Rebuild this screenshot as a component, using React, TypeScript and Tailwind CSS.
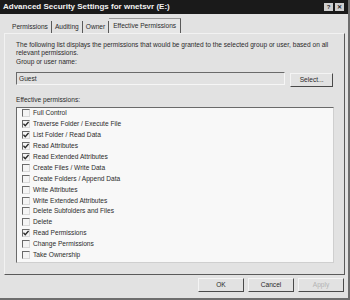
import React from 'react';

const perms: { label: string; checked: boolean }[] = [
  { label: 'Full Control', checked: false },
  { label: 'Traverse Folder / Execute File', checked: true },
  { label: 'List Folder / Read Data', checked: true },
  { label: 'Read Attributes', checked: true },
  { label: 'Read Extended Attributes', checked: true },
  { label: 'Create Files / Write Data', checked: false },
  { label: 'Create Folders / Append Data', checked: false },
  { label: 'Write Attributes', checked: false },
  { label: 'Write Extended Attributes', checked: false },
  { label: 'Delete Subfolders and Files', checked: false },
  { label: 'Delete', checked: false },
  { label: 'Read Permissions', checked: true },
  { label: 'Change Permissions', checked: false },
  { label: 'Take Ownership', checked: false },
];

function CheckBox({ checked }: { checked: boolean }) {
  return (
    <span className="w-[8px] h-[8px] border border-t-[#6a6a6a] border-l-[#6a6a6a] border-r-[#d8d8d8] border-b-[#d8d8d8] bg-[#f4f4f4] flex items-center justify-center shrink-0">
      {checked && (
        <svg width="6" height="6" viewBox="0 0 7 7">
          <path d="M0.5 3.2 L2.6 5.4 L6.5 1" fill="none" stroke="#2a2a2a" strokeWidth="1.6" />
        </svg>
      )}
    </span>
  );
}

function WinButton({ label, disabled }: { label: string; disabled?: boolean }) {
  return (
    <div className="w-[46px] h-[14px] flex items-center justify-center bg-[#e2e2e2] border border-t-[#f4f4f4] border-l-[#f4f4f4] border-r-[#4a4a4a] border-b-[#4a4a4a]">
      <span className={disabled ? 'text-[#b4b4b4]' : 'text-[#2a2a2a]'}>{label}</span>
    </div>
  );
}

export default function App() {
  return (
    <div className="w-[350px] h-[300px] bg-[#e2e2e2] flex flex-col border-r-2 border-b-2 border-[#6e6e6e] font-['Liberation_Sans',Arial,sans-serif] text-[6.6px] leading-[8px] text-[#2b2b2b] overflow-hidden">
      {/* title bar */}
      <div className="h-[14px] bg-[#1a1a1a] flex items-center justify-between pl-[3px] pr-[4px] shrink-0">
        <span className="font-bold text-[8px] text-[#f2f2f2]">Advanced Security Settings for wnetsvr (E:)</span>
        <div className="flex gap-[2px]">
          <div className="w-[9px] h-[8px] bg-[#cfcfcf] flex items-center justify-center text-[6px] font-bold text-[#222]">?</div>
          <div className="w-[9px] h-[8px] bg-[#cfcfcf] flex items-center justify-center text-[6px] font-bold text-[#222]">✕</div>
        </div>
      </div>

      {/* tabs */}
      <div className="h-[19px] flex items-end pl-[9px] shrink-0">
        {['Permissions', 'Auditing', 'Owner'].map((t) => (
          <div key={t} className="h-[12px] px-[3px] flex items-center border-r border-[#5a5a5a]">{t}</div>
        ))}
        <div className="h-[15px] px-[4px] flex items-center border-r border-t border-[#9a9a9a] border-r-[#5a5a5a] bg-[#e6e6e6]">Effective Permissions</div>
      </div>

      {/* panel */}
      <div className="ml-[4px] w-[341px] h-[242px] border border-l-[#f2f2f2] border-t-[#f2f2f2] border-r-[#5a5a5a] border-b-[#5a5a5a] px-[11px] pt-[7px] flex flex-col shrink-0">
        <p>
          The following list displays the permissions that would be granted to the selected group or user, based on all
          relevant permissions.
        </p>
        <div className="mt-[1px]">Group or user name:</div>
        <div className="flex items-start mt-[6px]">
          <div className="w-[271px] h-[13px] border-t border-l border-[#6a6a6a] border-b border-b-[#f6f6f6] border-r border-r-[#f6f6f6] flex items-center pl-[2px]">
            Guest
          </div>
          <div className="ml-[5px] mt-[1px] w-[43px] h-[14px] flex items-center justify-center border border-t-[#f4f4f4] border-l-[#f4f4f4] border-r-[#4a4a4a] border-b-[#4a4a4a]">
            Select...
          </div>
        </div>
        <div className="mt-[9px]">Effective permissions:</div>
        <div className="mt-[3px] w-[318px] h-[156px] bg-[#f8f8f8] border border-t-[#6a6a6a] border-l-[#6a6a6a] border-r-[#cfcfcf] border-b-[#cfcfcf] flex flex-col pl-[5px]">
          {perms.map((p) => (
            <div key={p.label} className="h-[10.9px] flex items-center gap-[3px]">
              <CheckBox checked={p.checked} />
              <span>{p.label}</span>
            </div>
          ))}
        </div>
      </div>

      {/* buttons */}
      <div className="flex justify-end gap-[4px] pr-[4px] pt-[3px]">
        <WinButton label="OK" />
        <WinButton label="Cancel" />
        <WinButton label="Apply" disabled />
      </div>
    </div>
  );
}
